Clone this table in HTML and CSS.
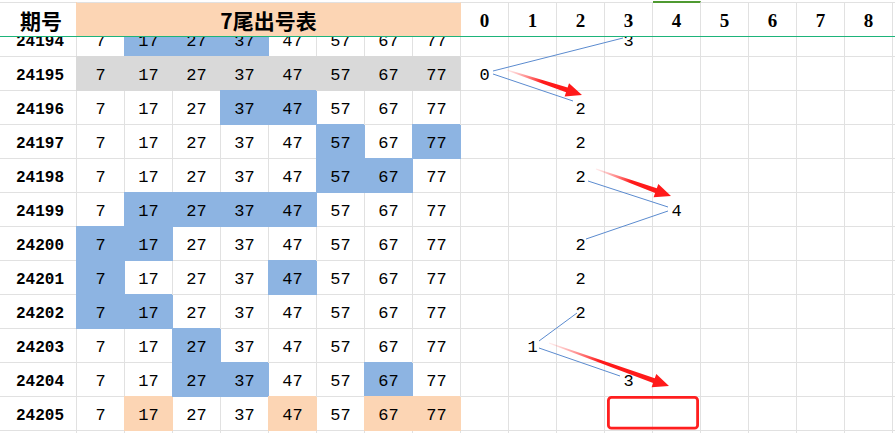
FILE: index.html
```html
<!DOCTYPE html>
<html>
<head>
<meta charset="utf-8">
<link rel="stylesheet" href="styles.css">
</head>
<body>
<div class="sheet">
  <div class="head">
    <div class="hc k ph">期号</div>
    <div class="hc k title">7尾出号表</div>
    <div class="hc d">0</div>
    <div class="hc d">1</div>
    <div class="hc d">2</div>
    <div class="hc d">3</div>
    <div class="hc d sel">4</div>
    <div class="hc d">5</div>
    <div class="hc d">6</div>
    <div class="hc d">7</div>
    <div class="hc d">8</div>
    <div class="hc d"></div>
  </div>
  <div class="body">
    <div class="grid">
      <div class="c per">24194</div><div class="c">7</div><div class="c b">17</div><div class="c b">27</div><div class="c b">37</div><div class="c">47</div><div class="c">57</div><div class="c">67</div><div class="c">77</div>
      <div class="c"></div><div class="c"></div><div class="c"></div><div class="c">3</div><div class="c"></div><div class="c"></div><div class="c"></div><div class="c"></div><div class="c"></div><div class="c"></div>

      <div class="c per">24195</div><div class="c g">7</div><div class="c g">17</div><div class="c g">27</div><div class="c g">37</div><div class="c g">47</div><div class="c g">57</div><div class="c g">67</div><div class="c g">77</div>
      <div class="c">0</div><div class="c"></div><div class="c"></div><div class="c"></div><div class="c"></div><div class="c"></div><div class="c"></div><div class="c"></div><div class="c"></div><div class="c"></div>

      <div class="c per">24196</div><div class="c">7</div><div class="c">17</div><div class="c">27</div><div class="c b">37</div><div class="c b">47</div><div class="c">57</div><div class="c">67</div><div class="c">77</div>
      <div class="c"></div><div class="c"></div><div class="c">2</div><div class="c"></div><div class="c"></div><div class="c"></div><div class="c"></div><div class="c"></div><div class="c"></div><div class="c"></div>

      <div class="c per">24197</div><div class="c">7</div><div class="c">17</div><div class="c">27</div><div class="c">37</div><div class="c">47</div><div class="c b">57</div><div class="c">67</div><div class="c b">77</div>
      <div class="c"></div><div class="c"></div><div class="c">2</div><div class="c"></div><div class="c"></div><div class="c"></div><div class="c"></div><div class="c"></div><div class="c"></div><div class="c"></div>

      <div class="c per">24198</div><div class="c">7</div><div class="c">17</div><div class="c">27</div><div class="c">37</div><div class="c">47</div><div class="c b">57</div><div class="c b">67</div><div class="c">77</div>
      <div class="c"></div><div class="c"></div><div class="c">2</div><div class="c"></div><div class="c"></div><div class="c"></div><div class="c"></div><div class="c"></div><div class="c"></div><div class="c"></div>

      <div class="c per">24199</div><div class="c">7</div><div class="c b">17</div><div class="c b">27</div><div class="c b">37</div><div class="c b">47</div><div class="c">57</div><div class="c">67</div><div class="c">77</div>
      <div class="c"></div><div class="c"></div><div class="c"></div><div class="c"></div><div class="c">4</div><div class="c"></div><div class="c"></div><div class="c"></div><div class="c"></div><div class="c"></div>

      <div class="c per">24200</div><div class="c b">7</div><div class="c b">17</div><div class="c">27</div><div class="c">37</div><div class="c">47</div><div class="c">57</div><div class="c">67</div><div class="c">77</div>
      <div class="c"></div><div class="c"></div><div class="c">2</div><div class="c"></div><div class="c"></div><div class="c"></div><div class="c"></div><div class="c"></div><div class="c"></div><div class="c"></div>

      <div class="c per">24201</div><div class="c b">7</div><div class="c">17</div><div class="c">27</div><div class="c">37</div><div class="c b">47</div><div class="c">57</div><div class="c">67</div><div class="c">77</div>
      <div class="c"></div><div class="c"></div><div class="c">2</div><div class="c"></div><div class="c"></div><div class="c"></div><div class="c"></div><div class="c"></div><div class="c"></div><div class="c"></div>

      <div class="c per">24202</div><div class="c b">7</div><div class="c b">17</div><div class="c">27</div><div class="c">37</div><div class="c">47</div><div class="c">57</div><div class="c">67</div><div class="c">77</div>
      <div class="c"></div><div class="c"></div><div class="c">2</div><div class="c"></div><div class="c"></div><div class="c"></div><div class="c"></div><div class="c"></div><div class="c"></div><div class="c"></div>

      <div class="c per">24203</div><div class="c">7</div><div class="c">17</div><div class="c b">27</div><div class="c">37</div><div class="c">47</div><div class="c">57</div><div class="c">67</div><div class="c">77</div>
      <div class="c"></div><div class="c">1</div><div class="c"></div><div class="c"></div><div class="c"></div><div class="c"></div><div class="c"></div><div class="c"></div><div class="c"></div><div class="c"></div>

      <div class="c per">24204</div><div class="c">7</div><div class="c">17</div><div class="c b">27</div><div class="c b">37</div><div class="c">47</div><div class="c">57</div><div class="c b">67</div><div class="c">77</div>
      <div class="c"></div><div class="c"></div><div class="c"></div><div class="c">3</div><div class="c"></div><div class="c"></div><div class="c"></div><div class="c"></div><div class="c"></div><div class="c"></div>

      <div class="c per">24205</div><div class="c">7</div><div class="c p">17</div><div class="c">27</div><div class="c">37</div><div class="c p">47</div><div class="c">57</div><div class="c p">67</div><div class="c p">77</div>
      <div class="c"></div><div class="c"></div><div class="c"></div><div class="c"></div><div class="c"></div><div class="c"></div><div class="c"></div><div class="c"></div><div class="c"></div><div class="c"></div>

      <div class="c"></div><div class="c"></div><div class="c"></div><div class="c"></div><div class="c"></div><div class="c"></div><div class="c"></div><div class="c"></div><div class="c"></div>
      <div class="c"></div><div class="c"></div><div class="c"></div><div class="c"></div><div class="c"></div><div class="c"></div><div class="c"></div><div class="c"></div><div class="c"></div><div class="c"></div>
    </div>
    <svg class="overlay" width="895" height="396" viewBox="0 37 895 396">
      <defs>
        <linearGradient id="ga" gradientUnits="userSpaceOnUse" x1="507" y1="70" x2="542" y2="82">
          <stop offset="0" stop-color="#ff8080" stop-opacity="0.15"/>
          <stop offset="1" stop-color="#ff1a1a" stop-opacity="1"/>
        </linearGradient>
        <linearGradient id="gb" gradientUnits="userSpaceOnUse" x1="596" y1="169" x2="631" y2="182">
          <stop offset="0" stop-color="#ff8080" stop-opacity="0.15"/>
          <stop offset="1" stop-color="#ff1a1a" stop-opacity="1"/>
        </linearGradient>
        <linearGradient id="gc" gradientUnits="userSpaceOnUse" x1="549" y1="343" x2="600" y2="361">
          <stop offset="0" stop-color="#ff8080" stop-opacity="0.15"/>
          <stop offset="1" stop-color="#ff1a1a" stop-opacity="1"/>
        </linearGradient>
      </defs>
      <g class="trend">
        <line x1="493" y1="71" x2="623" y2="38"/>
        <line x1="493" y1="74" x2="573" y2="101"/>
        <line x1="588" y1="181" x2="668" y2="207"/>
        <line x1="668" y1="211" x2="586" y2="239"/>
        <line x1="539" y1="341" x2="577" y2="313"/>
        <line x1="539" y1="348" x2="620" y2="376"/>
      </g>
      <polygon fill="url(#ga)" points="507.19,69.43 567.61,87.57 569.03,83.3 582,95 564.61,96.58 566.03,92.31 506.81,70.57"/>
      <polygon fill="url(#gb)" points="596.2,168.44 656.8,188.23 658.32,183.99 671,196 653.58,197.17 655.1,192.93 595.8,169.56"/>
      <polygon fill="url(#gc)" points="549.2,342.44 654.78,378.25 656.3,374.01 669,386 651.58,387.19 653.1,382.95 548.8,343.56"/>
      <rect class="mark" x="608.4" y="397.4" width="89.2" height="30.8" rx="3" ry="3"/>
    </svg>
  </div>
</div>
</body>
</html>
```
FILE: styles.css
```css
html, body {
  margin: 0;
  padding: 0;
  background: #ffffff;
}

.sheet {
  width: 895px;
  height: 433px;
  overflow: hidden;
  font-family: "Liberation Mono", monospace;
  color: #000;
}

.head {
  display: grid;
  grid-template-columns: 77px repeat(18, 48px);
  padding-top: 2px;
  border-bottom: 1px solid #1db47a;
}

.hc {
  height: 34px;
  box-sizing: border-box;
  border-top: 1px solid #e1e1e1;
  border-right: 1px solid #e1e1e1;
  display: flex;
  align-items: center;
  justify-content: center;
}

.hc.k {
  font-family: "Noto Sans CJK SC", sans-serif;
  font-weight: 700;
  font-size: 21px;
  padding-top: 1px;
}

.hc.ph {
  padding-left: 6px;
}

.hc.title {
  grid-column: span 8;
  background: #fcd5b4;
  border-right-color: #fcd5b4;
  box-shadow: -1px 0 0 #fcd5b4;
}

.hc.d {
  font-family: "Liberation Serif", serif;
  font-weight: 700;
  font-size: 19px;
  padding-top: 3px;
}

.hc.sel {
  border-top: 2px solid #4f9a31;
  margin-top: -1px;
  height: 35px;
}

.body {
  position: relative;
  height: 396px;
  overflow: hidden;
}

.grid {
  display: grid;
  grid-template-columns: 77px repeat(18, 48px);
  grid-auto-rows: 34px;
  margin-top: -14px;
}

.c {
  box-sizing: border-box;
  border-right: 1px solid #e1e1e1;
  border-bottom: 1px solid #e1e1e1;
  display: flex;
  align-items: center;
  justify-content: center;
  font-size: 17px;
  padding-top: 4px;
}

.per {
  font-weight: 700;
  font-size: 16px;
  padding-left: 4px;
}

.b {
  background: #8db4e2;
  border-color: #8db4e2;
  box-shadow: -1px -1px 0 #8db4e2, -1px 0 0 #8db4e2;
}

.g {
  background: #d9d9d9;
  border-color: #d9d9d9;
  box-shadow: -1px -1px 0 #d9d9d9, -1px 0 0 #d9d9d9;
}

.p {
  background: #fcd5b4;
  border-color: #fcd5b4;
  box-shadow: -1px -1px 0 #fcd5b4, -1px 0 0 #fcd5b4;
}

.overlay {
  position: absolute;
  top: 0;
  left: 0;
}

.trend line {
  stroke: #5b8bcf;
  stroke-width: 1;
  fill: none;
}

.mark {
  fill: none;
  stroke: #ff1f1f;
  stroke-width: 2.8;
}
```
